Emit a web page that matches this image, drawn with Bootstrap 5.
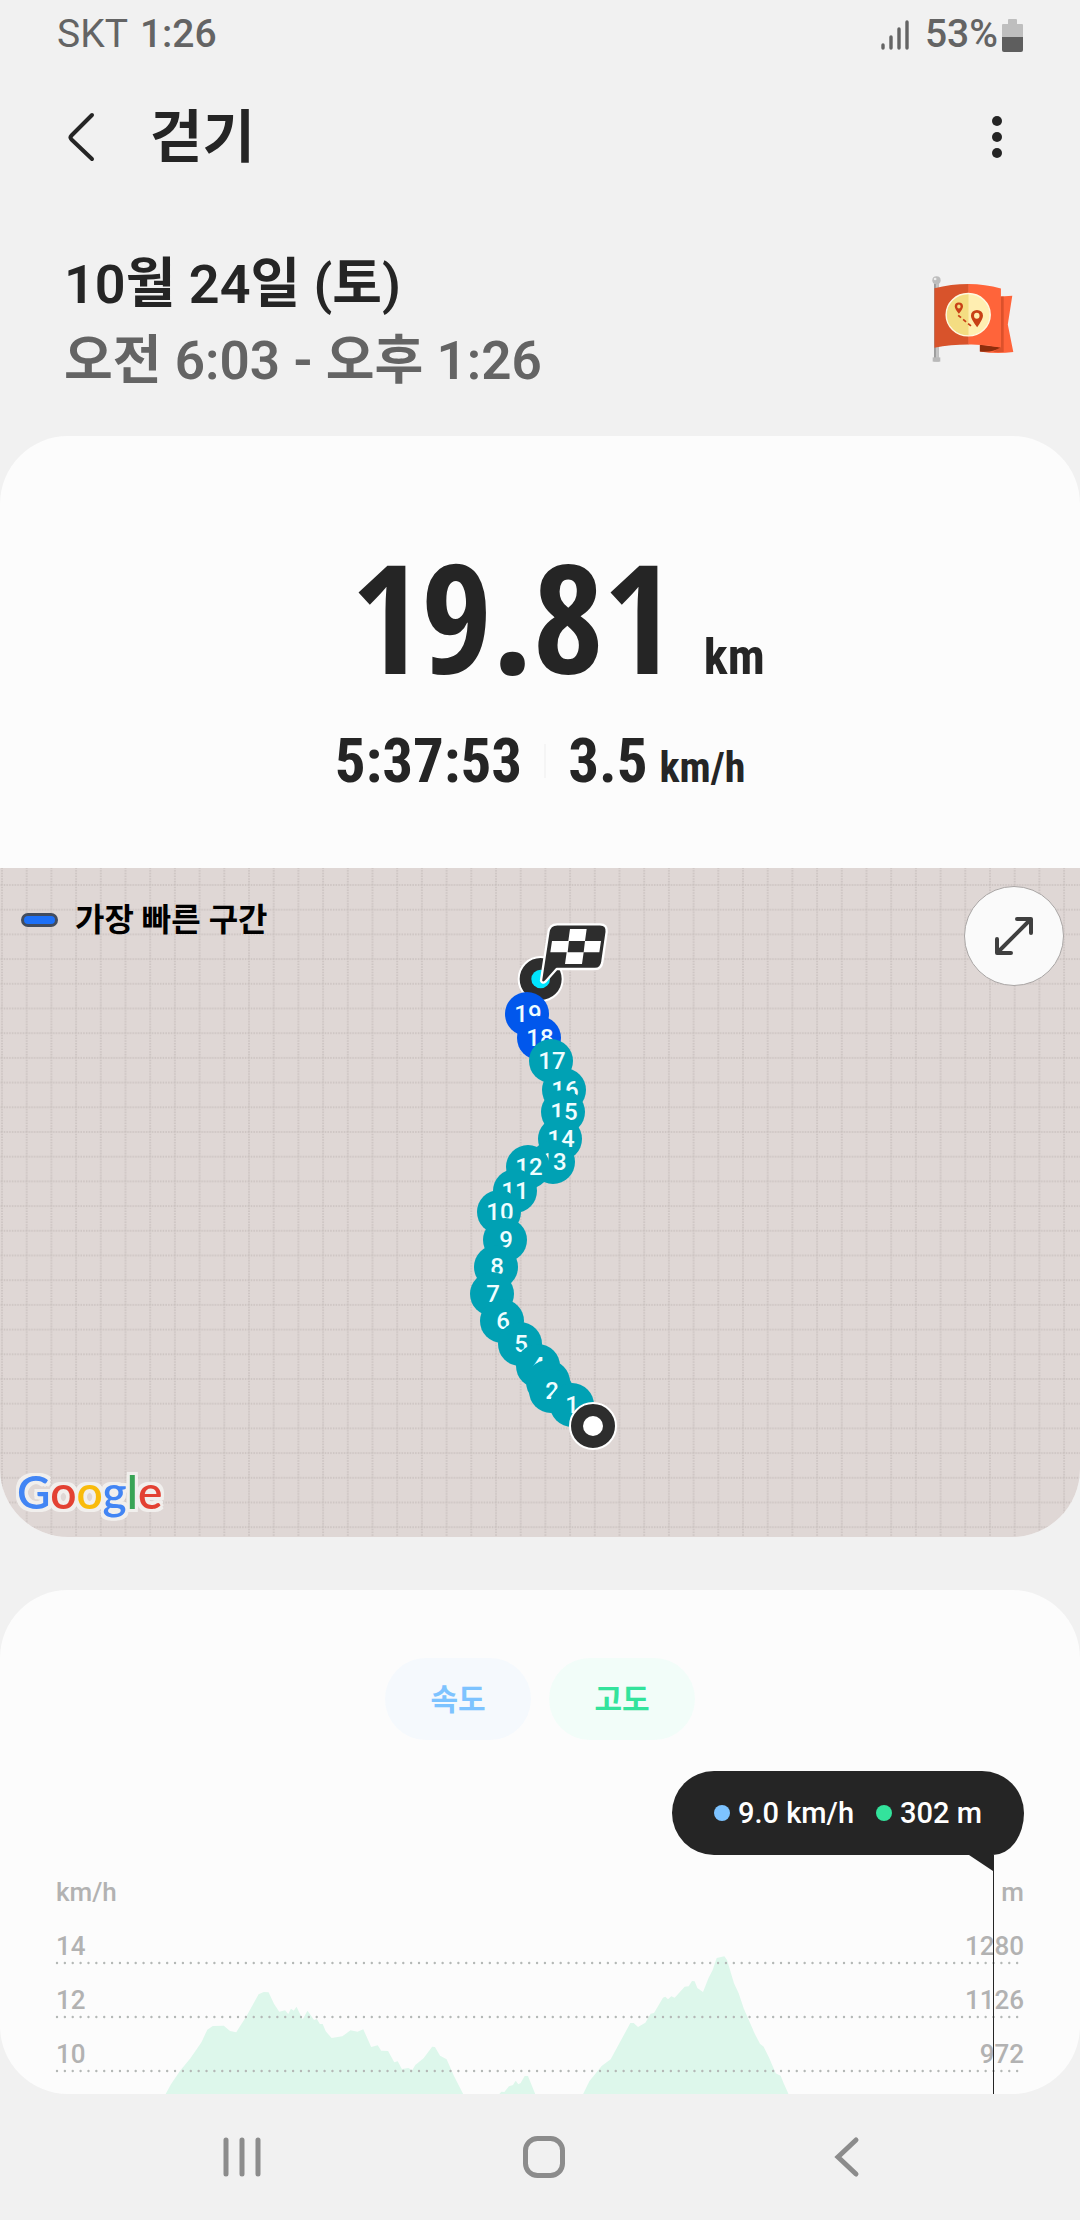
<!DOCTYPE html>
<html lang="ko">
<head>
<meta charset="utf-8">
<meta name="viewport" content="width=device-width, initial-scale=1">
<title>걷기</title>
<link href="https://cdn.jsdelivr.net/npm/bootstrap@5.3.0/dist/css/bootstrap.min.css" rel="stylesheet">
<style>
  body { background: #f1f1f1; color: #252525; font-family: Roboto, "Noto Sans CJK KR", sans-serif; font-weight: 500; }
  svg { display: block; }
  .status-bar { height: 69px; padding: 0 57px; font-size: 39px; line-height: 1; color: #646464; }
  .status-left { gap: 12px; }
  .app-bar { height: 136px; padding: 0 70px 0 54px; }
  .icon-btn { padding: 0; border: 0; color: inherit; }
  .app-title { font-size: 57px; line-height: 1; margin: 0; font-weight: 600; }
  .session { padding: 41px 66px 36px 64px; font-size: 53px; line-height: 77px; font-weight: 600; }
  .session h2 { font-size: 54px; line-height: 77px; margin: 0; font-weight: 600; }
  .session-time { color: #646464; margin: 0; }
  .session-flag { margin-top: 30px; }
  .panel { background: #fcfcfc; border-radius: 68px; overflow: hidden; }
  .stats { padding: 120px 0 75px; font-family: "Roboto Condensed", Roboto, sans-serif; font-weight: 700; }
  .distance { padding-left: 36px; gap: 30px; line-height: 120px; }
  .distance-value { font-family: "Open Sans Condensed", "Roboto Condensed", sans-serif; font-size: 152px; }
  .distance-unit { font-size: 50px; line-height: 1; }
  .pace { margin-top: 47px; font-size: 61px; line-height: 64px; }
  .pace-unit { font-size: 42px; line-height: 1; margin-left: 12px; }
  .pace-rule { width: 2px; height: 34px; margin: 0 22px; background: #f5f5f5; }
  .route-map { background: #dfd7d5; }
  .route-canvas { width: 100%; height: auto; }
  .legend { top: 32px; left: 21px; gap: 17px; font-size: 32px; line-height: 40px; font-weight: 700; color: #000; }
  .legend-line { width: 37px; height: 14px; border: 3px solid #424c5e; border-radius: 7px; background: #1d70f7; }
  .expand-btn { top: 18px; right: 16px; width: 100px; height: 100px; border: 1px solid #a9a5a4; border-radius: 50%; background: #fafafa; }
  .map-credit { left: 17px; bottom: 17px; font: 600 46px/56px Lato, sans-serif;
    filter: drop-shadow(3px 0 0 #f1efed) drop-shadow(-3px 0 0 #f1efed) drop-shadow(0 3px 0 #f1efed) drop-shadow(0 -3px 0 #f1efed); }
  .g-blue { color: #4285f4; } .g-red { color: #e34133; } .g-yellow { color: #f9bb0b; } .g-green { color: #38a455; }
  .chart-panel { margin-top: 53px; padding-top: 68px; }
  .chips { gap: 18px; }
  .chip { width: 146px; height: 82px; border: 0; border-radius: 41px; font-size: 30px; font-weight: 700; }
  .chip-speed { background: #f5f9fd; color: #7dc3ff; }
  .chip-height { background: #f2fdf9; color: #33e39c; }
  .readout { margin: 31px 56px 0 auto; width: 352px; height: 84px; padding: 0 42px; border-radius: 42px 42px 31px 42px / 42px;
    background: #252525; color: #fff; font-size: 29px; line-height: 1; white-space: nowrap; }
  .key-dot { width: 16px; height: 16px; border-radius: 50%; margin-right: 8px; }
  .plot { padding: 20px 56px 23px; font-size: 26px; line-height: 34px; color: #b2b2b2; }
  .tick-row { height: 54px; }
  .plot svg { inset: 0; width: 100%; height: 100%; }
  .nav-keys { height: 126px; padding: 0 82px 0 91px; color: #8c8c8c; }
</style>
<script src="https://cdn.jsdelivr.net/npm/bootstrap@5.3.0/dist/js/bootstrap.bundle.min.js"></script>
</head>
<body>
<div class="status-bar d-flex align-items-center justify-content-between">
  <div class="status-left d-flex"><span class="fw-normal">SKT</span><span>1:26</span></div>
  <div class="d-flex align-items-center">
    <svg class="me-3" width="28" height="30" viewBox="0 0 28 30" fill="none" stroke="currentColor" stroke-width="3.4" stroke-linecap="round" aria-hidden="true"><path d="M2 25v3M10 17v11M18 9v19M26 2v26"/></svg>
    <span>53%</span>
    <svg class="ms-1" width="21" height="34" viewBox="0 0 21 34" aria-hidden="true"><path fill="#bebebe" d="M6 2q0-1 1-1h7q1 0 1 1v4h5q1 0 1 1v12H0V7q0-1 1-1h5z"/><path fill="#5e5e5e" d="M0 19h21v13q0 2-2 2H2q-2 0-2-2z"/></svg>
  </div>
</div>

<header class="app-bar d-flex align-items-center justify-content-between">
  <div class="d-flex align-items-center gap-5">
    <button class="btn icon-btn" type="button" aria-label="뒤로"><svg width="48" height="60" viewBox="0 0 48 60" fill="none" stroke="currentColor" stroke-width="4" stroke-linecap="round" stroke-linejoin="round"><path d="M38 8 17.500 28.500q-2 2 0 4L38 52"/></svg></button>
    <h1 class="app-title">걷기</h1>
  </div>
  <button class="btn icon-btn" type="button" aria-label="더보기"><svg width="26" height="60" viewBox="0 0 26 60" fill="currentColor"><circle cx="13" cy="14" r="5"/><circle cx="13" cy="30" r="5"/><circle cx="13" cy="46" r="5"/></svg></button>
</header>

<section class="session d-flex justify-content-between align-items-start">
  <div>
    <h2>10월 24일 (토)</h2>
    <p class="session-time">오전 6:03 - 오후 1:26</p>
  </div>
  <svg class="session-flag" width="82" height="86" viewBox="1136 828 238 260" preserveAspectRatio="none" aria-hidden="true">
    <path fill="#969696" d="M1142 850h14v236h-14z"/><path fill="#c4c4c4" d="M1147 850h9v236h-9z"/>
    <circle cx="1149" cy="841" r="12" fill="#bdbdbd"/><circle cx="1145" cy="837" r="4" fill="#eee"/>
    <path fill="#b9b9b9" d="M1138 1074h22v13h-22z"/>
    <path fill="#ff643a" d="M1325 891 1369 888 1356 975 1372 1058Q1320 1064 1275 1056V1036L1325 1040Z"/>
    <path fill="#dc512b" d="M1336 890h8V1058h-30l22-18z"/>
    <path fill="#8e2d0c" d="M1275 1036 1335 1044Q1310 1060 1275 1056Z"/>
    <path fill="#d8532b" d="M1143 865Q1190 852 1243 852V1035Q1190 1035 1143 1045Z"/>
    <path fill="#ff643a" d="M1242 852Q1290 852 1336 866V1044Q1290 1034 1242 1035Z"/>
    <circle cx="1241" cy="945" r="64" fill="#ffeeb1"/><path fill="#f4dd82" d="M1242 881a64 64 0 0 0 0 128z"/>
    <circle cx="1241" cy="945" r="64" fill="none" stroke="#fff8df" stroke-width="4"/>
    <path fill="#c84016" fill-rule="evenodd" d="M1214 942q-12-15-12-22a12 12 0 0 1 24 0q0 7-12 22zm0-16a5 6 0 1 0 0-12 5 6 0 0 0 0 12zM1267 983q-18-25-18-35a17 17 0 0 1 35 0q0 10-17 35zm-1-26a8 9 0 1 0 0-18 8 9 0 0 0 0 18z"/>
    <path fill="none" stroke="#c84016" stroke-width="5" stroke-dasharray="11 8" d="M1212 947 1255 984"/>
  </svg>
</section>

<main>
  <section class="panel">
    <div class="stats">
      <div class="distance d-flex justify-content-center align-items-baseline">
        <span class="distance-value">19.81</span><span class="distance-unit">km</span>
      </div>
      <div class="pace d-flex justify-content-center align-items-center">
        <span>5:37:53</span><span class="pace-rule"></span>
        <span>3.5<span class="pace-unit">km/h</span></span>
      </div>
    </div>
    <div class="route-map position-relative">
      <svg class="route-canvas" viewBox="0 0 1080 669" role="img" aria-label="경로 지도">
        <defs>
          <pattern id="grid" width="24.7" height="24.7" x="1" y="16" patternUnits="userSpaceOnUse">
            <path d="M1 0V24.700M0 1H24.700" stroke="#c8bfbd" stroke-width="1.500" stroke-dasharray="1.500 1.200" fill="none"/>
          </pattern>
        </defs>
        <rect width="1080" height="669" fill="url(#grid)"/>
        <g transform="translate(440 12) scale(.33333)">
          <circle cx="302" cy="297" r="66" fill="#2d2d2d" stroke="#fff" stroke-width="6"/>
          <circle cx="302" cy="297" r="28" fill="#00e5ff"/>
          <path d="M303 302 325 158Q328 133 352 133H480Q502 133 500 156L487 246Q484 267 465 267H350L316 305Q308 312 303 302Z" fill="#2d2d2d" stroke="#fff" stroke-width="7" stroke-linejoin="round"/>
          <path fill="#fff" d="M390 147h50l-5 36h48l-5 34h-47l-5 35h-51l5-35h-49l5-34h49zM387 183l-4 34h48l4-34z" fill-rule="evenodd"/>
        </g>
        <g font-size="24" font-weight="500" text-anchor="middle" fill="#effdff">
          <circle cx="527" cy="146" r="22" fill="#0157ec"/><text x="528" y="154">19</text>
          <circle cx="539" cy="170" r="22" fill="#0157ec"/><text x="540" y="178">18</text>
          <circle cx="551" cy="193" r="22" fill="#00a1b4"/><text x="552" y="201">17</text>
          <circle cx="564" cy="222" r="22" fill="#00a1b4"/><text x="565" y="230">16</text>
          <circle cx="563" cy="244" r="22" fill="#00a1b4"/><text x="564" y="252">15</text>
          <circle cx="560" cy="271" r="22" fill="#00a1b4"/><text x="561" y="279">14</text>
          <circle cx="553" cy="294" r="22" fill="#00a1b4"/><text x="553" y="302">13</text>
          <circle cx="528" cy="299" r="22" fill="#00a1b4"/><text x="529" y="307">12</text>
          <circle cx="515" cy="323" r="22" fill="#00a1b4"/><text x="515" y="331">11</text>
          <circle cx="499" cy="344" r="22" fill="#00a1b4"/><text x="500" y="352">10</text>
          <circle cx="505" cy="372" r="22" fill="#00a1b4"/><text x="506" y="380">9</text>
          <circle cx="496" cy="399" r="22" fill="#00a1b4"/><text x="497" y="407">8</text>
          <circle cx="492" cy="426" r="22" fill="#00a1b4"/><text x="493" y="434">7</text>
          <circle cx="502" cy="453" r="22" fill="#00a1b4"/><text x="503" y="461">6</text>
          <circle cx="520" cy="476" r="22" fill="#00a1b4"/><text x="521" y="484">5</text>
          <circle cx="538" cy="498" r="22" fill="#00a1b4"/><text x="538" y="506">4</text>
          <circle cx="548" cy="514" r="22" fill="#00a1b4"/><text x="548" y="522">3</text>
          <circle cx="551" cy="523" r="22" fill="#00a1b4"/><text x="552" y="531">2</text>
          <circle cx="572" cy="537" r="22" fill="#00a1b4"/><text x="572" y="545">1</text>
        </g>
        <circle cx="593" cy="558" r="23" fill="#2d2d2d" stroke="#fff" stroke-width="2"/>
        <circle cx="593" cy="558" r="10" fill="#fff"/>
      </svg>
      <div class="legend position-absolute d-flex align-items-center"><span class="legend-line"></span><span>가장 빠른 구간</span></div>
      <button class="expand-btn icon-btn position-absolute d-flex align-items-center justify-content-center" type="button" aria-label="지도 확대">
        <svg width="42" height="42" viewBox="0 0 42 42" fill="none" stroke="#3f3f3f" stroke-width="4" stroke-linecap="round" stroke-linejoin="round"><path d="M24 4H38V18M4 24V38H18M37 5 5 37"/></svg>
      </button>
      <div class="map-credit position-absolute"><span class="g-blue">G</span><span class="g-red">o</span><span class="g-yellow">o</span><span class="g-blue">g</span><span class="g-green">l</span><span class="g-red">e</span></div>
    </div>
  </section>

  <section class="panel chart-panel">
    <div class="chips d-flex justify-content-center">
      <button class="chip chip-speed" type="button">속도</button>
      <button class="chip chip-height" type="button">고도</button>
    </div>
    <div class="readout d-flex align-items-center justify-content-between">
      <span class="d-flex align-items-center"><span class="key-dot" style="background:#7dc3ff"></span>9.0 km/h</span>
      <span class="d-flex align-items-center"><span class="key-dot" style="background:#33e39c"></span>302 m</span>
    </div>
    <div class="plot position-relative">
      <div class="d-flex justify-content-between"><span>km/h</span><span>m</span></div>
      <div class="tick-row d-flex justify-content-between align-items-end"><span>14</span><span>1280</span></div>
      <div class="tick-row d-flex justify-content-between align-items-end"><span>12</span><span>1126</span></div>
      <div class="tick-row d-flex justify-content-between align-items-end"><span>10</span><span>972</span></div>
      <svg class="position-absolute" viewBox="0 0 1080 239" preserveAspectRatio="none" aria-hidden="true">
        <g fill="#ddf7eb">
          <path transform="translate(0 -5) scale(.34435 .33333)" d="M481 732 497 702 523 662 553 625 585 577 602 539 618 528 650 527 668 543 686 547 716 498 751 433 766 426 780 427 796 462 811 485 828 481 837 492 845 476 853 482 861 470 879 508 893 482 912 510 920 507 929 522 937 522 946 544 963 564 994 559 1018 541 1038 545 1055 538 1078 591 1097 586 1107 602 1127 603 1145 637 1155 634 1167 657 1186 654 1197 661 1206 645 1230 625 1255 590 1263 591 1278 617 1297 628 1318 677 1345 732Z"/>
          <path transform="translate(480 65) scale(.33333)" d="M57 523 64 515 73 516 87 499 99 495 107 482 115 493 122 489 134 468 144 468 166 523ZM309 523 328 484 365 438 392 418 436 337 451 309 461 309 474 321 496 308 512 281 522 279 549 233 556 230 564 238 574 229 584 233 614 200 626 199 636 183 644 184 652 204 669 216 686 173 698 150 710 114 733 109 741 120 762 190 776 220 791 265 825 343 840 371 851 380 868 415 887 460 902 467 911 490 926 523Z"/>
        </g>
        <path fill="none" stroke="#b4b8b6" stroke-width="2.400" stroke-linecap="round" stroke-dasharray="0 7.870" d="M57 108H1024M57 162H1024M57 216H1024"/>
        <path fill="#252525" d="M969 0H993V16ZM993 0h1V239h-1z"/>
      </svg>
    </div>
  </section>
</main>

<nav class="nav-keys d-flex">
  <button class="btn icon-btn w-100 d-flex align-items-center justify-content-center" type="button" aria-label="최근 앱"><svg width="38" height="42" viewBox="0 0 38 42" stroke="currentColor" stroke-width="5" stroke-linecap="round"><path d="M3 4v34M19 4v34M35 4v34"/></svg></button>
  <button class="btn icon-btn w-100 d-flex align-items-center justify-content-center" type="button" aria-label="홈"><svg width="42" height="42" viewBox="0 0 42 42" fill="none" stroke="currentColor" stroke-width="5"><rect x="2.500" y="2.500" width="37" height="37" rx="12"/></svg></button>
  <button class="btn icon-btn w-100 d-flex align-items-center justify-content-center" type="button" aria-label="이전"><svg width="26" height="42" viewBox="0 0 26 42" fill="none" stroke="currentColor" stroke-width="5" stroke-linecap="round"><path d="M22 4 4 21 22 38"/></svg></button>
</nav>
</body>
</html>
